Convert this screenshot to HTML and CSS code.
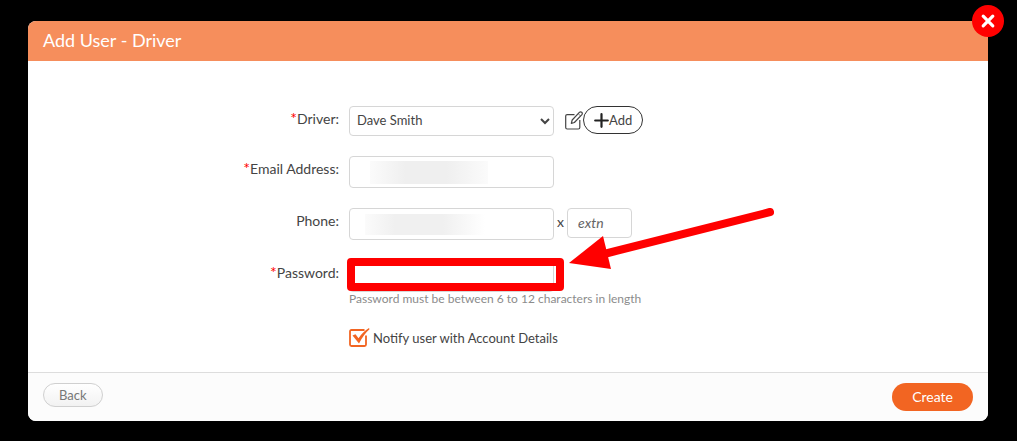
FILE: index.html
```html
<!DOCTYPE html>
<html lang="en">
<head>
<meta charset="utf-8">
<title>Add User - Driver</title>
<link rel="stylesheet" href="styles.css">
</head>
<body>
<main class="dialog">
  <button class="close" type="button" aria-label="Close">
    <svg width="32" height="32" viewBox="0 0 32 32"><path d="M11.200 11.200 20.800 20.800M20.800 11.200 11.200 20.800" fill="none" stroke="#fff" stroke-width="3.2" stroke-linecap="round"/></svg>
  </button>
  <header class="header"><h1 class="title">Add User - Driver</h1></header>
  <form class="form">
    <div class="row">
      <label class="label" for="driver"><span class="required">*</span>Driver:</label>
      <div class="controls">
        <select class="field select" id="driver"><option>Dave Smith</option></select>
        <button class="edit" type="button" aria-label="Edit driver">
          <svg width="18" height="19" viewBox="0 0 18 19" fill="none" stroke="#444" stroke-width="1.2" stroke-linejoin="round"><path d="M9.500 3.600H2.200Q.7 3.600 .7 5.100V16.500Q.7 18 2.200 18H13.300Q14.800 18 14.800 16.500V9"/><path d="M14.600 1.200Q15.600 .3 16.700 1.300T16.900 3.600L9.400 11.500 6.300 12.300 7.200 9Z"/><path d="M13.200 2.700 15.600 5" stroke-width=".7"/></svg>
        </button>
        <button class="add" type="button">
          <svg width="15" height="15" viewBox="0 0 15 15"><path d="M7.500 1.200V13.800M1.200 7.500H13.800" stroke="#222" stroke-width="2.200" stroke-linecap="round"/></svg>Add
        </button>
      </div>
    </div>
    <div class="row">
      <label class="label" for="email"><span class="required">*</span>Email Address:</label>
      <div class="controls"><input class="field redacted-email" id="email" type="email"></div>
    </div>
    <div class="row">
      <label class="label" for="phone">Phone:</label>
      <div class="controls">
        <input class="field redacted-phone" id="phone" type="tel">
        <label class="times" for="extn">x</label>
        <input class="field extn" id="extn" type="text" placeholder="extn">
      </div>
    </div>
    <div class="row">
      <label class="label" for="password"><span class="required">*</span>Password:</label>
      <div class="password">
        <input class="field" id="password" type="password" aria-describedby="hint">
        <svg class="callout" width="430" height="88" viewBox="0 0 430 88" aria-hidden="true">
          <rect x="4" y="57" width="209" height="25" fill="none" stroke="red" stroke-width="8" stroke-linejoin="round"/>
          <path d="M259 48.500 423 7" stroke="red" stroke-width="8" stroke-linecap="round"/>
          <path d="M222 58 256 31 264 64Z" fill="red"/>
        </svg>
        <p class="hint" id="hint">Password must be between 6 to 12 characters in length</p>
        <label class="notify">
          <input class="notify-input" type="checkbox" checked>
          <svg class="tick" width="21" height="20" viewBox="0 0 21 20" aria-hidden="true"><path d="M15.500 2H2.500Q1 2 1 3.500V16.500Q1 18 2.500 18H15.500Q17 18 17 16.500V7.500" fill="none" stroke="#f26522" stroke-width="1.800"/><path d="M3.500 7.500 6.500 6.300 9.500 10.200Q14 3.500 20 0L20.500 1.300Q15 6 10 15.500Z" fill="#f26522"/></svg>
          <span>Notify user with Account Details</span>
        </label>
      </div>
    </div>
  </form>
  <footer class="footer">
    <button class="back" type="button">Back</button>
    <button class="create" type="button">Create</button>
  </footer>
</main>
</body>
</html>
```

FILE: styles.css
```css
* { box-sizing: border-box; }

body {
  margin: 0;
  padding: 21px 29px 20px 28px;
  background: #000;
  color: #444;
  font: 14px/20px Lato, "Open Sans", sans-serif;
}

button, input, select {
  margin: 0;
  color: inherit;
  font: inherit;
  font-size: 13px;
}

.dialog {
  position: relative;
  background: #fff;
  border-radius: 8px;
}

.close {
  position: absolute;
  top: -16px;
  right: -16px;
  width: 32px;
  height: 32px;
  padding: 0;
  border: 0;
  border-radius: 50%;
  background: red;
}

.close svg, .add svg, .edit svg { display: block; }

.header {
  height: 40px;
  padding: 0 15px;
  border-radius: 8px 8px 0 0;
  background: #f68e5c;
}

.title {
  margin: 0;
  color: #fff;
  font-size: 18px;
  font-weight: 400;
  line-height: 38px;
}

.form {
  display: grid;
  gap: 20px;
  padding: 45px 17px 23px 0;
}

.row {
  display: grid;
  grid-template-columns: 1fr 2fr;
  column-gap: 10px;
}

.label { padding-top: 3px; text-align: right; }
.required { color: red; font-size: 16px; line-height: 16px; }

.controls { display: flex; align-items: flex-start; }

.field {
  display: block;
  width: 205px;
  height: 32px;
  padding: 0 10px;
  border: 1px solid #d6d6d6;
  border-radius: 4px;
  background-color: #fff;
}

.select { height: 30px; padding: 0 3px 2px; }

.redacted-email, .redacted-phone { background-repeat: no-repeat; }

.redacted-email {
  background-image: linear-gradient(90deg, #fbfbfb, #efefef 30%, #efefef 65%, #fbfbfb);
  background-size: 118px 23px;
  background-position: 20px 4px;
}

.redacted-phone {
  background-image: linear-gradient(90deg, #fbfbfb, #f0f0f0 25%, #f0f0f0 65%, #fff);
  background-size: 120px 21px;
  background-position: 15px 5px;
}

.edit {
  margin: 5px 0 0 11px;
  padding: 0;
  border: 0;
  background: none;
}

.add {
  display: flex;
  align-items: center;
  height: 28px;
  padding: 0 10px;
  border: 1px solid #333;
  border-radius: 14px;
  background: #fff;
}

.times { padding: 4px 3px 0; }

.extn { width: 65px; height: 30px; padding-bottom: 2px; font-size: 14px; }
.extn::placeholder { color: #666; font-style: italic; }

.password { position: relative; }

.callout {
  position: absolute;
  top: -55px;
  left: -2px;
  pointer-events: none;
}

.hint {
  margin: 0;
  color: #8c8c8c;
  font-size: 12px;
  line-height: 14px;
}

.notify {
  display: flex;
  align-items: center;
  gap: 3px;
  width: max-content;
  margin-top: 22px;
  font-size: 13px;
}

.notify-input {
  position: absolute;
  width: 20px;
  height: 20px;
  margin: 0;
  opacity: 0;
}

.footer {
  display: flex;
  justify-content: space-between;
  align-items: flex-start;
  padding: 10px 15px;
  border-top: 1px solid #ddd;
  border-radius: 0 0 8px 8px;
  background: #fcfcfc;
}

.form { padding-bottom: 24px; }

.back {
  height: 24px;
  padding: 0 15px;
  border: 1px solid #d0d0d0;
  border-radius: 12px;
  background: linear-gradient(#fff, #f2f2f2);
  color: #777;
}

.create {
  height: 28px;
  padding: 0 20px;
  border: 0;
  border-radius: 14px;
  background: #f26522;
  color: #fff;
  font-size: 14px;
}
```
